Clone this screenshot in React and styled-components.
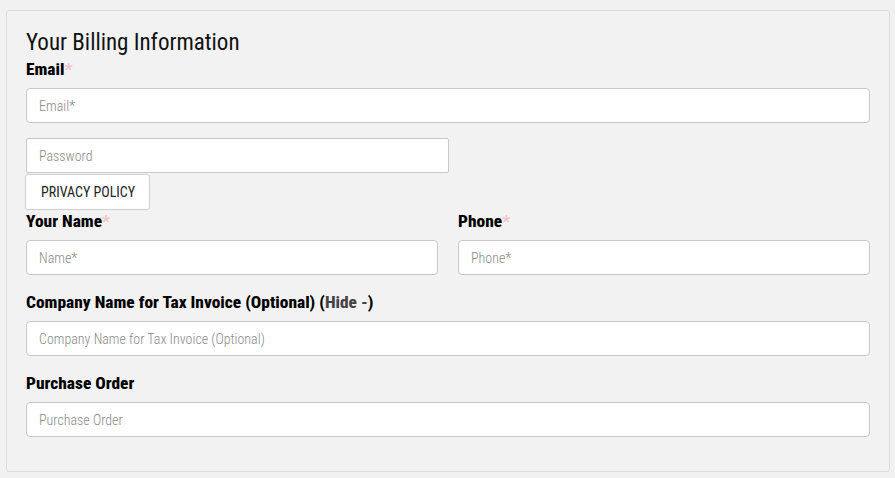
import styled, { createGlobalStyle } from "styled-components";

const Global = createGlobalStyle`
  body {
    margin: 0;
    background: #f1f1f1;
    font-family: "Roboto Condensed", Roboto, "Liberation Sans Narrow", sans-serif;
    font-stretch: condensed;
  }
`;

const Page = styled.div`
  padding: 10px 5px 6px 6px;
`;

const Panel = styled.div`
  background: #f2f2f2;
  border: 1px solid #dcdcdc;
  border-radius: 3px;
  padding: 17px 19px 34px 19px;
`;

const Title = styled.h2`
  margin: 0 0 2px;
  font-size: 23px;
  font-weight: 400;
  line-height: 30px;
  color: #111;
`;

const Label = styled.label`
  display: block;
  font-size: 17.4px;
  font-weight: 800;
  line-height: 19px;
  color: #000;
  margin-bottom: 9px;
`;

const Star = styled.span`
  color: #f2c4c4;
`;

const Hide = styled.span`
  color: #444;
`;

const Input = styled.input`
  display: block;
  box-sizing: border-box;
  width: ${(p) => p.$width || "100%"};
  height: 35px;
  padding: 0 12px;
  background: #fff;
  border: 1px solid #c8c8c8;
  border-radius: ${(p) => (p.$square ? "2px" : "4px")};
  font-family: inherit;
  font-stretch: condensed;
  font-size: 14px;
  font-weight: 300;
  color: #333;
  outline: none;
  &::placeholder {
    color: #8a8a8a;
  }
`;

const Field = styled.div`
  margin-bottom: ${(p) => p.$mb || "18px"};
`;

const Button = styled.button`
  display: block;
  height: 36px;
  margin: 1px 0 2px -1px;
  padding: 0 14px 0 15px;
  background: #fff;
  border: 1px solid #cfcfcf;
  border-radius: 3px;
  font-family: inherit;
  font-stretch: condensed;
  font-size: 14px;
  color: #222;
  cursor: pointer;
`;

const Row = styled.div`
  display: grid;
  grid-template-columns: 1fr 1fr;
  gap: 20px;
`;

export default function App() {
  return (
    <>
      <Global />
      <Page>
        <Panel>
          <Title>Your Billing Information</Title>
          <Field $mb="15px">
            <Label>
              Email<Star>*</Star>
            </Label>
            <Input placeholder="Email*" />
          </Field>
          <Input placeholder="Password" type="password" $width="423px" $square />
          <Button>PRIVACY POLICY</Button>
          <Row>
            <Field>
              <Label>
                Your Name<Star>*</Star>
              </Label>
              <Input placeholder="Name*" />
            </Field>
            <Field>
              <Label>
                Phone<Star>*</Star>
              </Label>
              <Input placeholder="Phone*" />
            </Field>
          </Row>
          <Field>
            <Label>
              Company Name for Tax Invoice (Optional) (<Hide>Hide -</Hide>)
            </Label>
            <Input placeholder="Company Name for Tax Invoice (Optional)" />
          </Field>
          <Field $mb="0">
            <Label>Purchase Order</Label>
            <Input placeholder="Purchase Order" />
          </Field>
        </Panel>
      </Page>
    </>
  );
}
